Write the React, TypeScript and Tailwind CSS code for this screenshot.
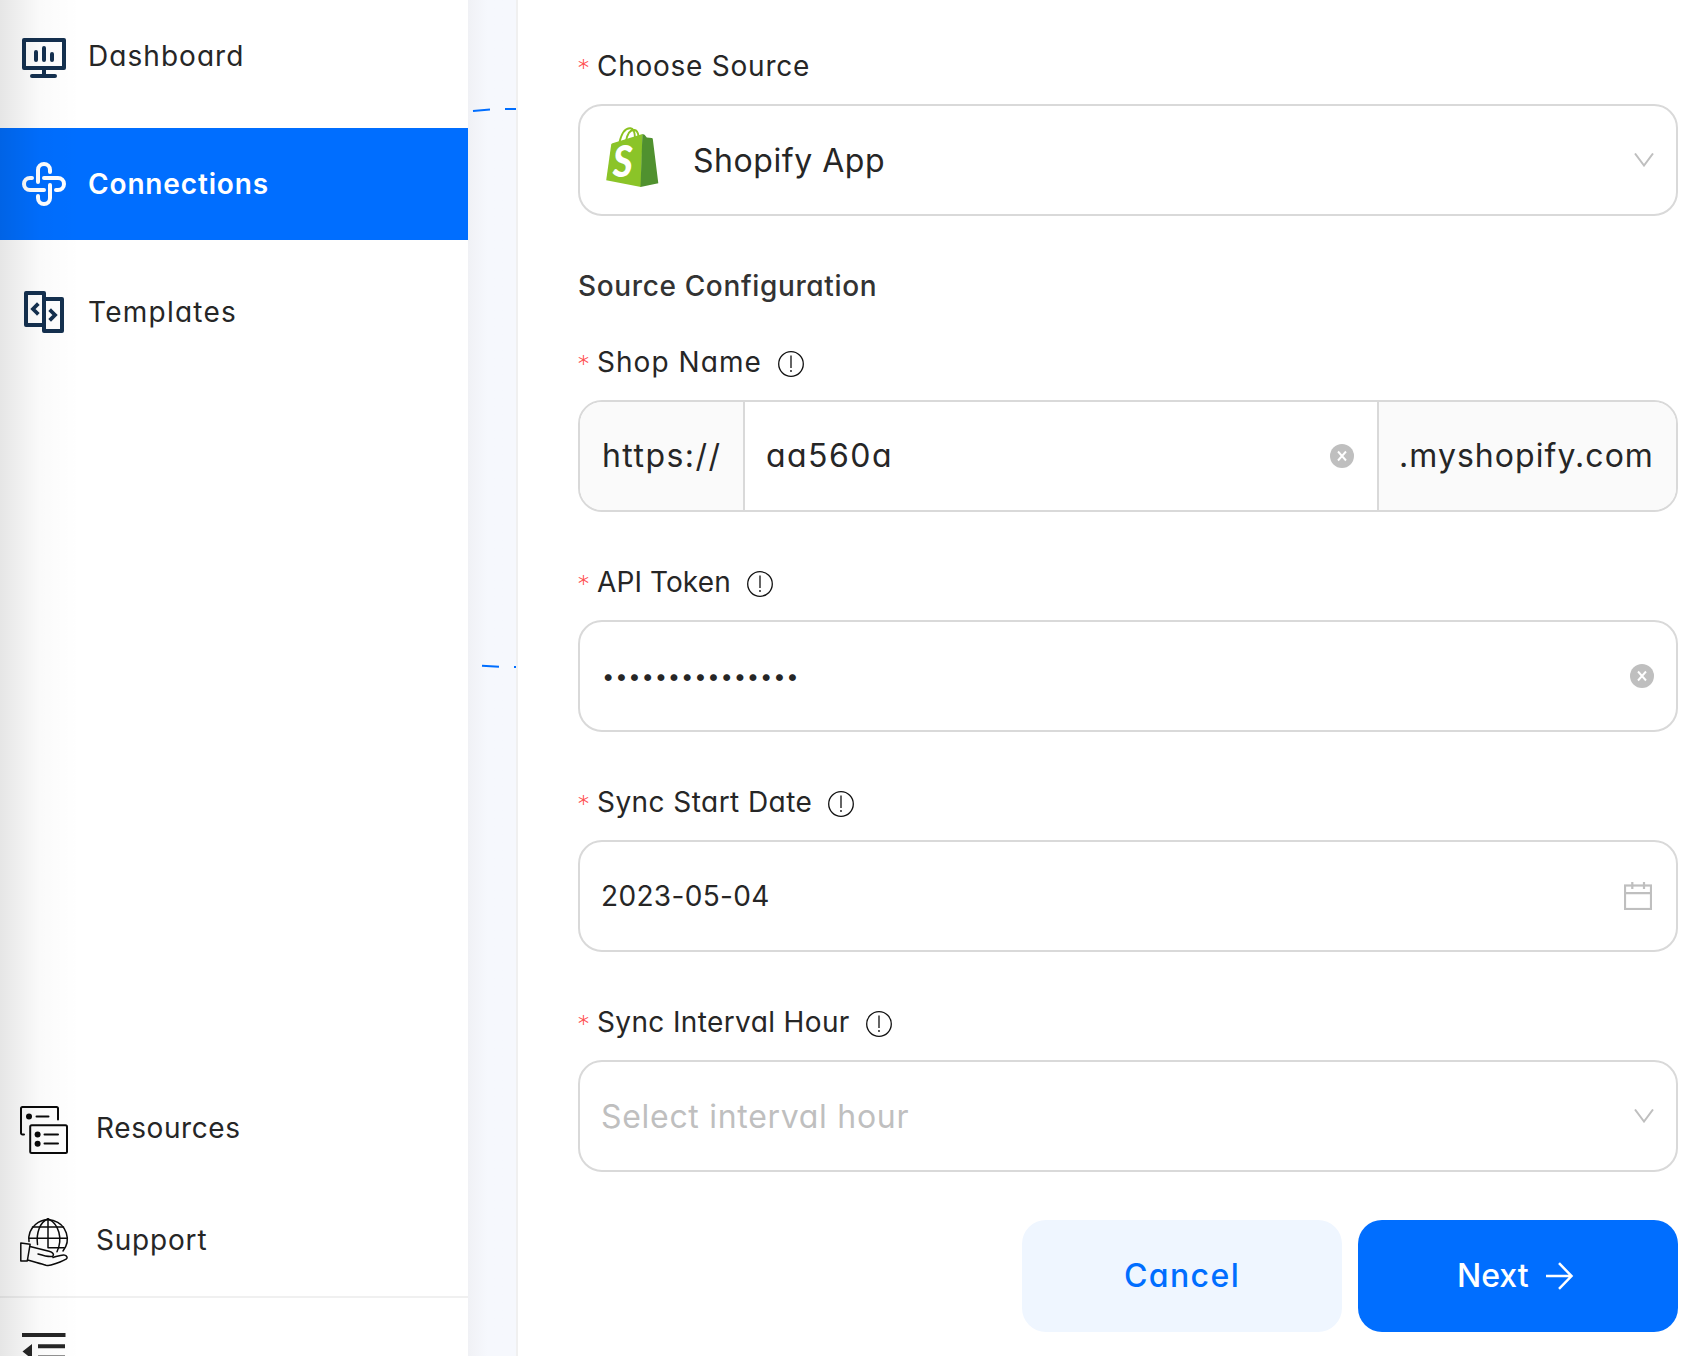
import type { ReactNode } from "react";

function DashboardIcon() {
  return (
    <svg className="h-11 w-11 shrink-0 translate-y-0.5" viewBox="0 0 44 44" fill="none" stroke="#14304f" strokeWidth="4" strokeLinecap="round" strokeLinejoin="round">
      <rect x="2" y="4" width="40" height="28" />
      <path d="M14 16v8M22 12v12M30 18v6M22 32v7" />
      <path d="M10 40h23" />
    </svg>
  );
}

function ConnectionsIcon() {
  return (
    <svg className="h-11 w-11 shrink-0" viewBox="0 0 44 44" fill="none" stroke="#fff" strokeWidth="4" strokeLinecap="round">
      <path d="M28 10V8a6 6 0 0 0-12 0v12" />
      <path d="M34 28h2a6 6 0 0 0 0-12H22" />
      <path d="M16 34v2a6 6 0 0 0 12 0V23" />
      <path d="M10 16H8a6 6 0 0 0 0 12h14" />
    </svg>
  );
}

function TemplatesIcon() {
  return (
    <svg className="h-11 w-11 shrink-0" viewBox="0 0 44 44" fill="none" stroke="#14304f" strokeWidth="4" strokeLinecap="round" strokeLinejoin="round">
      <rect x="4" y="3" width="18" height="32" />
      <rect x="22" y="9" width="18" height="32" />
      <path d="M15 15l-4 4 4 4M29 21l4 4-4 4" strokeLinecap="square" strokeLinejoin="miter" strokeWidth="3.800" />
    </svg>
  );
}

function ResourcesIcon() {
  return (
    <svg className="h-12 w-12 shrink-0 translate-y-px overflow-visible" viewBox="0 0 48 48" fill="none" stroke="#0a0a0a" strokeWidth="2" strokeLinecap="round" strokeLinejoin="round">
      <path d="M4 29.500H2.500A1.500 1.500 0 0 1 1 28V3.500A1.500 1.500 0 0 1 2.500 2h34A1.500 1.500 0 0 1 38 3.500v11" />
      <rect x="10.200" y="20.200" width="36.800" height="27.800" rx="1.500" />
      <path d="M16.500 11.500h12M24.500 29.500h13.500M24.500 38.600h13.500" />
      <g fill="#0a0a0a" stroke="none">
        <circle cx="9" cy="11.500" r="3" />
        <circle cx="17.600" cy="29.400" r="3" />
        <circle cx="17.600" cy="38.700" r="3" />
      </g>
    </svg>
  );
}

function SupportIcon() {
  return (
    <svg className="h-12 w-12 shrink-0 overflow-visible" viewBox="0 0 48 48" fill="none" stroke="#0a0a0a" strokeWidth="1.500" strokeLinecap="round" strokeLinejoin="round">
      <path d="M9 25.500A19.200 19.200 0 1 1 43 35" />
      <path d="M28 2.800V31.700M12.500 11h31M9 22.300h38.300M28 31.700h16" />
      <path d="M28 2.800C20 6 16 17 17.500 28.500M28 2.800c11 5 15 20 9 33" />
      <path d="M.8 27l9.300 1.300L7.300 45H.8z" />
      <path d="M10 30.500l19 4.700c4 1 5.500 3.500 3.700 5-2 .8-8-.2-14.700-2.200" />
      <path d="M33 41.500c5-1.500 9-3.200 11.500-2.500 2 .5 3.500 2.500 2 3.800C42 45.500 36 47.500 31 49c-2 .6-3 .6-5 .2-6-1.500-12-3.500-18.500-5.200" />
    </svg>
  );
}

function InfoIcon() {
  return (
    <svg className="mt-1 h-[26px] w-[26px] shrink-0" viewBox="0 0 26 26" fill="none">
      <circle cx="13" cy="13" r="12.300" stroke="#111" strokeWidth="1.300" />
      <path d="M13 4.500v12.500" stroke="#111" strokeWidth="1.300" />
      <circle cx="13" cy="20" r="0.900" fill="#111" />
    </svg>
  );
}

function ClearIcon() {
  return (
    <svg className="h-6 w-6 shrink-0" viewBox="0 0 24 24" fill="none">
      <circle cx="12" cy="12" r="12" fill="#bfbfbf" />
      <path d="M8 7.500l8 9M16 7.500l-8 9" stroke="#fff" strokeWidth="1.900" />
    </svg>
  );
}

function ChevronIcon() {
  return (
    <svg className="h-3.5 w-5 shrink-0" viewBox="0 0 20 14" fill="none">
      <path d="M1 .5l9 12 9-12" stroke="#bfbfbf" strokeWidth="2" />
    </svg>
  );
}

function CalendarIcon() {
  return (
    <svg className="h-7 w-7 shrink-0" viewBox="0 0 28 28" fill="none" stroke="#bfbfbf" strokeWidth="2.200">
      <rect x="1" y="3.500" width="26" height="23.500" />
      <path d="M1 11.200h26M8.300 0v7M20 0v7" />
    </svg>
  );
}

function ShopifyIcon() {
  return (
    <svg className="h-[60px] w-[53px] shrink-0 -translate-y-[3px]" viewBox="0 0 53 60">
      <path d="M13.500 15C16 5 20 .9 24.500 1.300c3 .3 4.300 3.500 4.500 9.500M20 14C21.500 6 25 2.500 28.500 3c3 .4 3.700 4 4 6" fill="none" stroke="#8bc220" strokeWidth="1.900" />
      <path d="M5.200 17.500Q5.400 16.700 6.500 16.300L36.500 7 35 60 .2 53.300z" fill="#8bc428" />
      <path d="M36.400 7l2.200.8 2.200 2.700 5 .5q.8.100 1 1l5.500 44.200L34.500 60z" fill="#50912f" />
      <text x="6.800" y="50" fill="#fff" className="font-['Lato'] text-[43px] font-black italic" textLength="20" lengthAdjust="spacingAndGlyphs">S</text>
    </svg>
  );
}

function Label({ text, tracking, info = true }: { text: string; tracking: string; info?: boolean }) {
  return (
    <div className="flex h-11 items-center whitespace-nowrap text-[28px]">
      <span className="w-[19px] -translate-x-px translate-y-0.5 text-[26px] font-extralight text-[#ff4d4f]">*</span>
      <span className={tracking}>{text}</span>
      {info && (
        <span className="ml-4">
          <InfoIcon />
        </span>
      )}
    </div>
  );
}

const box = "flex h-28 items-center rounded-3xl border-2 border-[#d9d9d9]";

function Field({ label, tracking, info, className = "mt-12", children }: {
  label: string;
  tracking: string;
  info?: boolean;
  className?: string;
  children: ReactNode;
}) {
  return (
    <div className={className}>
      <Label text={label} tracking={tracking} info={info} />
      <div className="mt-4">{children}</div>
    </div>
  );
}

export default function App() {
  return (
    <div className="flex h-[1356px] w-[1700px] overflow-hidden bg-white font-['Inter',sans-serif] text-[#262626] [font-feature-settings:'cv11']">
      <aside className="relative flex w-[468px] shrink-0 flex-col text-[28px]">
        <nav className="flex flex-col gap-4">
          <div className="flex h-28 items-center gap-[22px] pl-[22px]">
            <DashboardIcon />
            <span className="tracking-[1.050px]">Dashboard</span>
          </div>
          <div className="flex h-28 items-center gap-[22px] bg-[#006eff] pl-[22px] font-semibold text-white">
            <ConnectionsIcon />
            <span className="tracking-[0.850px]">Connections</span>
          </div>
          <div className="flex h-28 items-center gap-[22px] pl-[22px]">
            <TemplatesIcon />
            <span className="tracking-[1.250px]">Templates</span>
          </div>
        </nav>
        <div className="mt-auto flex h-[284px] flex-col">
          <div className="flex h-28 items-center gap-[27px] pl-5">
            <ResourcesIcon />
            <span className="translate-x-px tracking-[0.600px]">Resources</span>
          </div>
          <div className="flex h-28 items-center gap-[28px] pl-5">
            <SupportIcon />
            <span className="tracking-[0.800px]">Support</span>
          </div>
          <div className="h-[60px] border-t-2 border-[#f0f0f0] pt-[35px] pl-[22px]">
            <svg className="h-11 w-11" viewBox="0 0 44 44" fill="#262626">
              <path d="M0 0h43.500v4H0zM16 11.300h27v4H16zM16 22.500h27v4H16zM10 11v15L.5 18.500z" />
            </svg>
          </div>
        </div>
        <div className="pointer-events-none absolute inset-y-0 left-0 w-20 bg-linear-to-r from-black/10 via-black/2 via-50% to-transparent" />
      </aside>

      <div className="relative w-12 shrink-0 bg-linear-to-r from-[#f0f1f5] to-[#f6f8fd] to-40%">
        <svg className="absolute top-0 left-0 h-[700px] w-12" viewBox="0 0 48 700" fill="none" stroke="#006eff" strokeWidth="2">
          <path d="M5 111L22 109.500M37 109H48M14 665.700L31 666.800M46 667H48" />
        </svg>
      </div>

      <main className="flex-1 border-l-2 border-[#f0f0f0] pt-11 pr-[22px] pl-[60px]">
        <Field label="Choose Source" tracking="tracking-[0.750px]" info={false} className="">
          <div className={`${box} pr-[22px] pl-[26px]`}>
            <ShopifyIcon />
            <span className="ml-[34px] flex-1 translate-y-px text-[32px] tracking-[0.550px]">Shopify App</span>
            <ChevronIcon />
          </div>
        </Field>

        <h2 className="mt-12 flex h-11 items-center text-[28px] font-medium tracking-[0.640px] text-[#333]">
          Source Configuration
        </h2>

        <Field label="Shop Name" tracking="tracking-[1.050px]" className="mt-8">
          <div className={`${box} overflow-hidden text-[32px]`}>
            <span className="flex h-full w-[165px] items-center border-r-2 border-[#d9d9d9] bg-[#fafafa] pl-[22px] tracking-[1.450px]">https://</span>
            <span className="flex-1 pl-[21px] tracking-[1.450px]">aa560a</span>
            <ClearIcon />
            <span className="ml-[23px] flex h-full w-[299px] items-center border-l-2 border-[#d9d9d9] bg-[#fafafa] pl-5 tracking-[1.050px]">.myshopify.com</span>
          </div>
        </Field>

        <Field label="API Token" tracking="tracking-[0.100px]">
          <div className={`${box} justify-between pr-[22px] pl-[22px]`}>
            <span className="text-[22px] tracking-[0.790px]">•••••••••••••••</span>
            <ClearIcon />
          </div>
        </Field>

        <Field label="Sync Start Date" tracking="tracking-[0.440px]">
          <div className={`${box} justify-between pr-6 pl-[21px]`}>
            <span className="text-[28px] tracking-[0.340px]">2023-05-04</span>
            <CalendarIcon />
          </div>
        </Field>

        <Field label="Sync Interval Hour" tracking="tracking-[0.370px]">
          <div className={`${box} justify-between pr-[22px] pl-[21px]`}>
            <span className="translate-y-px text-[32px] tracking-[0.700px] text-[#bfbfbf]">Select interval hour</span>
            <ChevronIcon />
          </div>
        </Field>

        <div className="mt-12 flex justify-end gap-4 text-[32px] font-medium">
          <button className="h-28 w-80 rounded-3xl bg-[#eff6ff] tracking-[1.400px] text-[#006eff]">Cancel</button>
          <button className="flex h-28 w-80 items-center rounded-3xl bg-[#006eff] pl-[99px] text-white">
            Next
            <svg className="ml-[17px] h-7 w-7" viewBox="0 0 28 28" fill="none" stroke="#fff" strokeWidth="2.500">
              <path d="M0 14h26M13 1.200l12.500 12.800L13 26.800" />
            </svg>
          </button>
        </div>
      </main>
    </div>
  );
}
